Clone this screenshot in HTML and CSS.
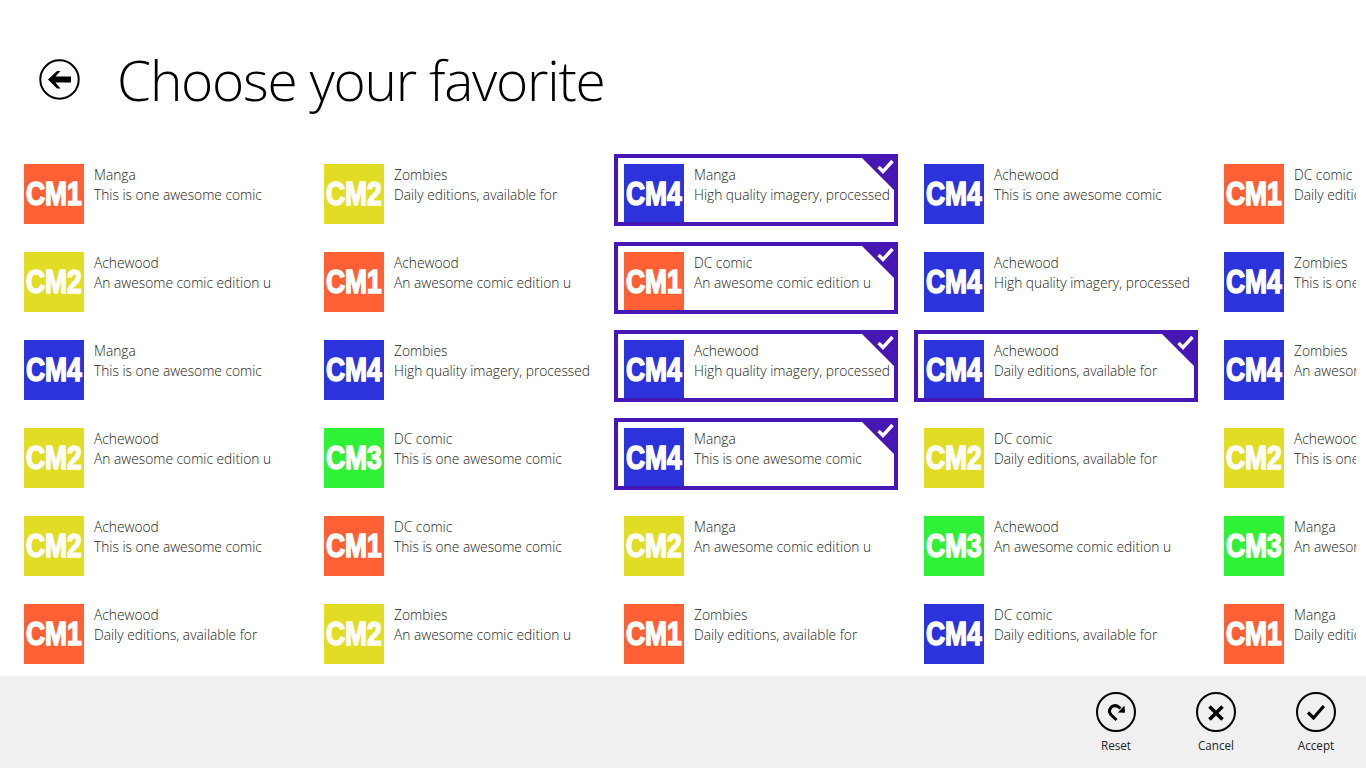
FILE: index.html
```html
<!DOCTYPE html>
<html lang="en">
<head>
    <meta charset="UTF-8">
    <title>Choose your favorite</title>
    <link rel="stylesheet" href="styles.css">
</head>
<body>
    <header class="page-head">
        <button class="back-btn" aria-label="Back">
            <svg width="42" height="42" viewBox="0 0 42 42">
                <circle cx="21.5" cy="20.5" r="19.2" fill="none" stroke="#000" stroke-width="2"/>
                <path d="M10 20.5 L19 12 L22.5 12 L17.5 17.5 L33 17.5 L33 23.5 L17.5 23.5 L22.5 29.5 L19 29.5 Z" fill="#000"/>
            </svg>
        </button>
        <h1>Choose your favorite</h1>
    </header>

    <main class="grid-clip">
        <div class="grid">
            <div class="tile"><div class="thumb cm1"><span>CM1</span></div><div class="info"><div>Manga</div><div>This is one awesome comic</div></div></div>
            <div class="tile"><div class="thumb cm2"><span>CM2</span></div><div class="info"><div>Achewood</div><div>An awesome comic edition u</div></div></div>
            <div class="tile"><div class="thumb cm4"><span>CM4</span></div><div class="info"><div>Manga</div><div>This is one awesome comic</div></div></div>
            <div class="tile"><div class="thumb cm2"><span>CM2</span></div><div class="info"><div>Achewood</div><div>An awesome comic edition u</div></div></div>
            <div class="tile"><div class="thumb cm2"><span>CM2</span></div><div class="info"><div>Achewood</div><div>This is one awesome comic</div></div></div>
            <div class="tile"><div class="thumb cm1"><span>CM1</span></div><div class="info"><div>Achewood</div><div>Daily editions, available for</div></div></div>

            <div class="tile"><div class="thumb cm2"><span>CM2</span></div><div class="info"><div>Zombies</div><div>Daily editions, available for</div></div></div>
            <div class="tile"><div class="thumb cm1"><span>CM1</span></div><div class="info"><div>Achewood</div><div>An awesome comic edition u</div></div></div>
            <div class="tile"><div class="thumb cm4"><span>CM4</span></div><div class="info"><div>Zombies</div><div>High quality imagery, processed</div></div></div>
            <div class="tile"><div class="thumb cm3"><span>CM3</span></div><div class="info"><div>DC comic</div><div>This is one awesome comic</div></div></div>
            <div class="tile"><div class="thumb cm1"><span>CM1</span></div><div class="info"><div>DC comic</div><div>This is one awesome comic</div></div></div>
            <div class="tile"><div class="thumb cm2"><span>CM2</span></div><div class="info"><div>Zombies</div><div>An awesome comic edition u</div></div></div>

            <div class="tile selected"><div class="thumb cm4"><span>CM4</span></div><div class="info"><div>Manga</div><div>High quality imagery, processed</div></div><svg class="tick" width="17" height="15" viewBox="0 0 17 15"><path d="M1.5 8 L6 12.5 L15.5 2" fill="none" stroke="#fff" stroke-width="3.4"/></svg></div>
            <div class="tile selected"><div class="thumb cm1"><span>CM1</span></div><div class="info"><div>DC comic</div><div>An awesome comic edition u</div></div><svg class="tick" width="17" height="15" viewBox="0 0 17 15"><path d="M1.5 8 L6 12.5 L15.5 2" fill="none" stroke="#fff" stroke-width="3.4"/></svg></div>
            <div class="tile selected"><div class="thumb cm4"><span>CM4</span></div><div class="info"><div>Achewood</div><div>High quality imagery, processed</div></div><svg class="tick" width="17" height="15" viewBox="0 0 17 15"><path d="M1.5 8 L6 12.5 L15.5 2" fill="none" stroke="#fff" stroke-width="3.4"/></svg></div>
            <div class="tile selected"><div class="thumb cm4"><span>CM4</span></div><div class="info"><div>Manga</div><div>This is one awesome comic</div></div><svg class="tick" width="17" height="15" viewBox="0 0 17 15"><path d="M1.5 8 L6 12.5 L15.5 2" fill="none" stroke="#fff" stroke-width="3.4"/></svg></div>
            <div class="tile"><div class="thumb cm2"><span>CM2</span></div><div class="info"><div>Manga</div><div>An awesome comic edition u</div></div></div>
            <div class="tile"><div class="thumb cm1"><span>CM1</span></div><div class="info"><div>Zombies</div><div>Daily editions, available for</div></div></div>

            <div class="tile"><div class="thumb cm4"><span>CM4</span></div><div class="info"><div>Achewood</div><div>This is one awesome comic</div></div></div>
            <div class="tile"><div class="thumb cm4"><span>CM4</span></div><div class="info"><div>Achewood</div><div>High quality imagery, processed</div></div></div>
            <div class="tile selected"><div class="thumb cm4"><span>CM4</span></div><div class="info"><div>Achewood</div><div>Daily editions, available for</div></div><svg class="tick" width="17" height="15" viewBox="0 0 17 15"><path d="M1.5 8 L6 12.5 L15.5 2" fill="none" stroke="#fff" stroke-width="3.4"/></svg></div>
            <div class="tile"><div class="thumb cm2"><span>CM2</span></div><div class="info"><div>DC comic</div><div>Daily editions, available for</div></div></div>
            <div class="tile"><div class="thumb cm3"><span>CM3</span></div><div class="info"><div>Achewood</div><div>An awesome comic edition u</div></div></div>
            <div class="tile"><div class="thumb cm4"><span>CM4</span></div><div class="info"><div>DC comic</div><div>Daily editions, available for</div></div></div>

            <div class="tile"><div class="thumb cm1"><span>CM1</span></div><div class="info"><div>DC comic</div><div>Daily editions, available for</div></div></div>
            <div class="tile"><div class="thumb cm4"><span>CM4</span></div><div class="info"><div>Zombies</div><div>This is one awesome comic</div></div></div>
            <div class="tile"><div class="thumb cm4"><span>CM4</span></div><div class="info"><div>Zombies</div><div>An awesome comic edition u</div></div></div>
            <div class="tile"><div class="thumb cm2"><span>CM2</span></div><div class="info"><div>Achewood</div><div>This is one awesome comic</div></div></div>
            <div class="tile"><div class="thumb cm3"><span>CM3</span></div><div class="info"><div>Manga</div><div>An awesome comic edition u</div></div></div>
            <div class="tile"><div class="thumb cm1"><span>CM1</span></div><div class="info"><div>Manga</div><div>Daily editions, available for</div></div></div>
        </div>
    </main>

    <footer class="app-bar">
        <div class="bar-btn">
            <svg width="42" height="42" viewBox="0 0 42 42">
                <circle cx="21" cy="21" r="19" fill="none" stroke="#000" stroke-width="2"/>
                <path d="M21.5 29 L16 23.8 Q12.8 20 16.2 16.2 Q20.5 12.5 25.5 17.5" fill="none" stroke="#000" stroke-width="3"/>
                <path d="M29.5 14.5 L30 21.8 L23 21.5 Z" fill="#000"/>
            </svg>
            <span>Reset</span>
        </div>
        <div class="bar-btn">
            <svg width="42" height="42" viewBox="0 0 42 42">
                <circle cx="21" cy="21" r="19" fill="none" stroke="#000" stroke-width="2"/>
                <path d="M14.5 15.5 L27.5 28.5 M27.5 15.5 L14.5 28.5" fill="none" stroke="#000" stroke-width="3.6"/>
            </svg>
            <span>Cancel</span>
        </div>
        <div class="bar-btn">
            <svg width="42" height="42" viewBox="0 0 42 42">
                <circle cx="21" cy="21" r="19" fill="none" stroke="#000" stroke-width="2"/>
                <path d="M13 21.5 L18.5 27 L28.8 15" fill="none" stroke="#000" stroke-width="3.2"/>
            </svg>
            <span>Accept</span>
        </div>
    </footer>
</body>
</html>
```

FILE: styles.css
```css
* {
    box-sizing: border-box;
}

html, body {
    margin: 0;
    height: 100%;
}

body {
    width: 1366px;
    height: 768px;
    overflow: hidden;
    display: flex;
    flex-direction: column;
    background-color: #fff;
    font-family: "Open Sans", "Liberation Sans", sans-serif;
    color: #000;
}

.page-head {
    height: 154px;
    display: flex;
    align-items: flex-start;
    padding: 59px 0 0 38px;
}

.back-btn {
    width: 42px;
    height: 42px;
    padding: 0;
    border: 0;
    background: none;
    display: block;
}

.page-head h1 {
    margin: -17px 0 0 37px;
    font-size: 55px;
    font-weight: 300;
    letter-spacing: -1.25px;
    line-height: 76px;
    white-space: nowrap;
}

.grid-clip {
    flex: 1;
    width: 1356px;
    overflow: hidden;
    padding-left: 14px;
}

.grid {
    display: grid;
    grid-template-columns: repeat(5, 284px);
    grid-template-rows: repeat(6, 72px);
    grid-auto-flow: column;
    gap: 16px;
}

.tile {
    position: relative;
    display: flex;
    padding: 10px;
    overflow: hidden;
}

.thumb {
    flex: none;
    width: 60px;
    height: 60px;
    display: flex;
    align-items: center;
    justify-content: center;
    font-family: "Liberation Sans", sans-serif;
    font-weight: 700;
    font-size: 33px;
    color: #fff;
    -webkit-text-stroke: 1.6px #fff;
}

.thumb span {
    display: block;
    flex: none;
    transform: scaleX(0.8);
}

.cm1 { background-color: #ff6135; }
.cm2 { background-color: #e1dc24; }
.cm3 { background-color: #2ff135; }
.cm4 { background-color: #2d33db; }

.info {
    margin-left: 10px;
    padding-top: 1px;
    font-size: 13.78px;
    font-weight: 300;
    color: #222;
    line-height: 20px;
    white-space: nowrap;
}

.selected::before {
    content: "";
    position: absolute;
    inset: 0;
    border: 4px solid #4617b4;
    z-index: 1;
}

.selected::after {
    content: "";
    position: absolute;
    top: 0;
    right: 0;
    border-top: 40px solid #4617b4;
    border-left: 40px solid transparent;
    z-index: 1;
}

.tick {
    position: absolute;
    top: 5px;
    right: 4px;
    z-index: 2;
}

.app-bar {
    height: 92px;
    background-color: #f0f0f0;
    display: flex;
    justify-content: flex-end;
    padding: 15px 0 0 0;
    flex: none;
}

.bar-btn {
    width: 100px;
    display: flex;
    flex-direction: column;
    align-items: center;
    font-size: 11.7px;
    color: #222;
}

.bar-btn svg {
    display: block;
}

.bar-btn span {
    margin-top: 4px;
    line-height: 16px;
}
```
